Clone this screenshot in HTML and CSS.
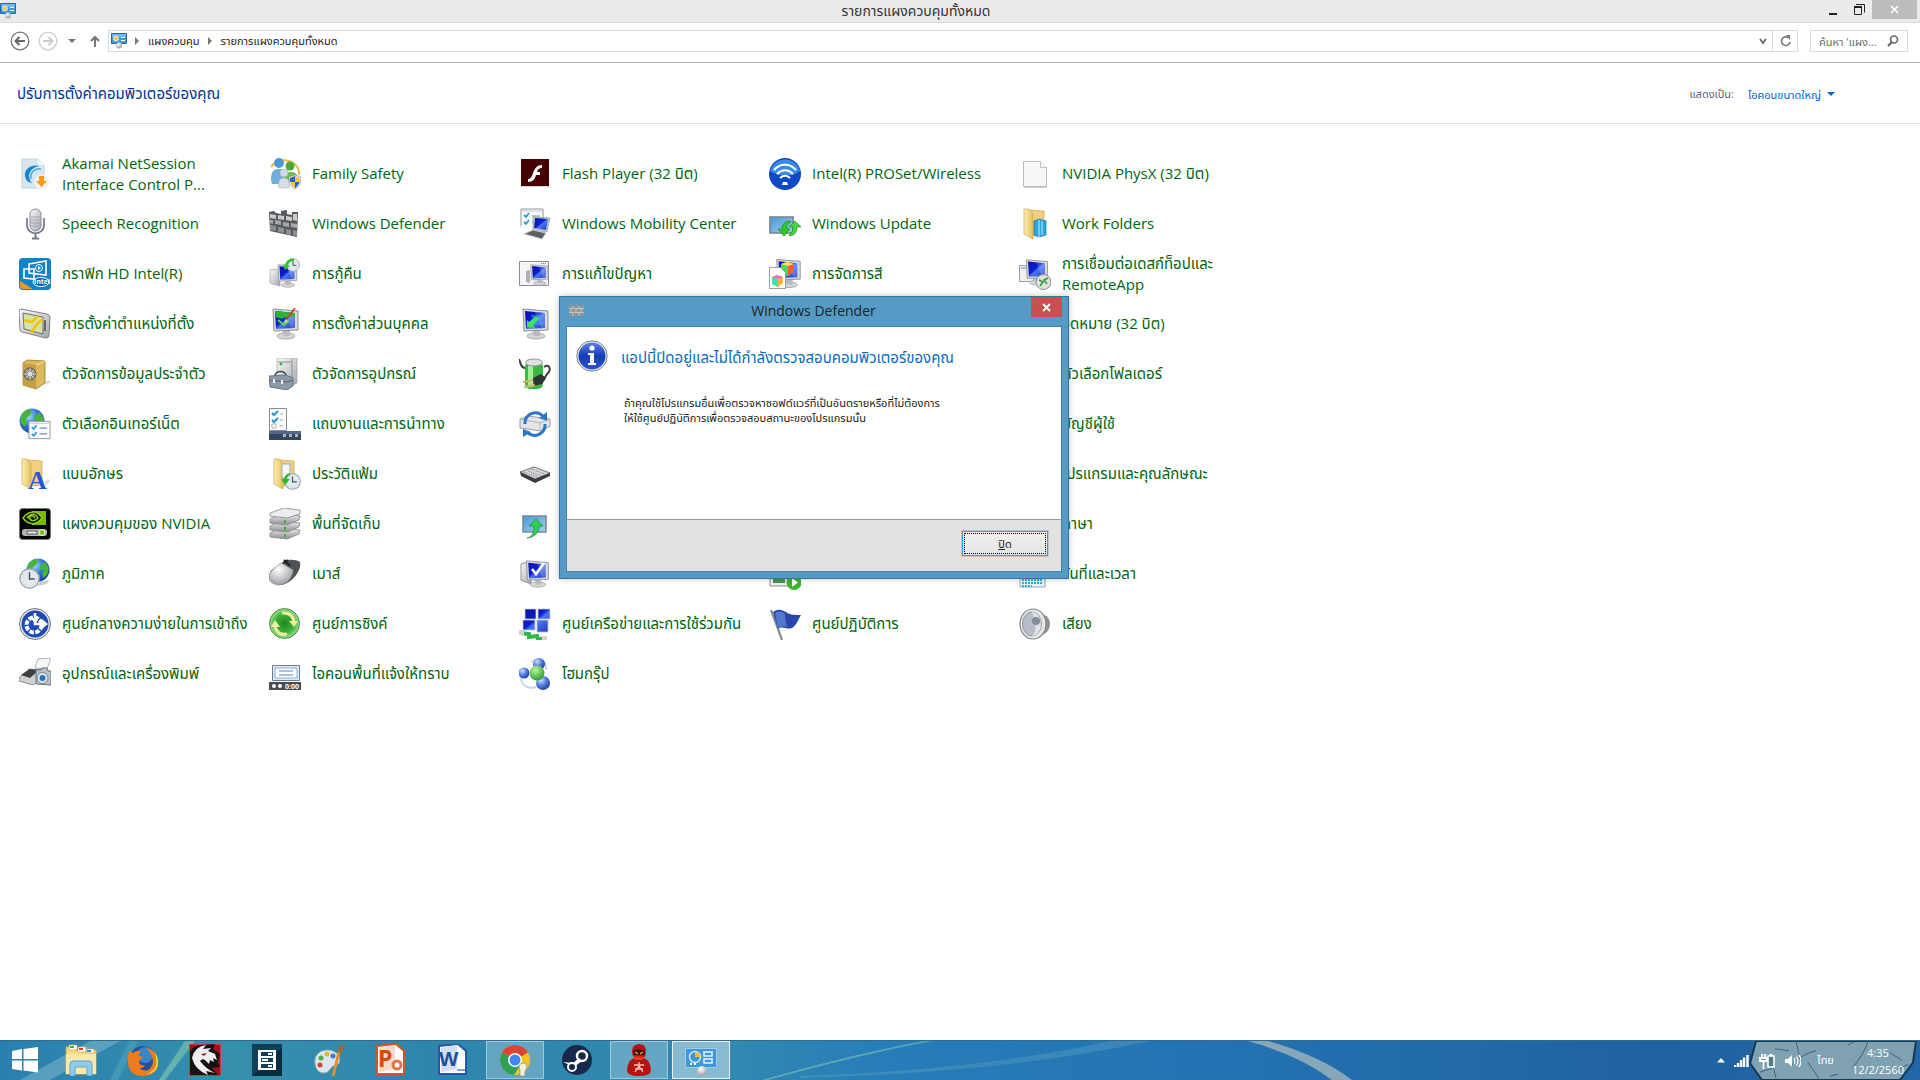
FILE: index.html
```html
<!DOCTYPE html>
<html lang="th">
<head>
  <meta charset="UTF-8" />
  <meta name="viewport" content="width=device-width, initial-scale=1.0"/>
  <title>รายการแผงควบคุมทั้งหมด</title>
  <link rel="stylesheet" href="styles.css">
</head>
<body>

<!-- icon sprite -->
<svg class="sprite" aria-hidden="true">
  <defs>
    <linearGradient id="gBlue" x1="0" y1="0" x2="1" y2="1"><stop offset="0" stop-color="#0a12a8"/><stop offset=".45" stop-color="#0b1fd0"/><stop offset=".55" stop-color="#4a78ee"/><stop offset="1" stop-color="#1a34c8"/></linearGradient>
    <linearGradient id="gSky" x1="0" y1="0" x2="1" y2="1"><stop offset="0" stop-color="#4c97d6"/><stop offset="1" stop-color="#9fd3ef"/></linearGradient>
    <linearGradient id="gGray" x1="0" y1="0" x2="1" y2="1"><stop offset="0" stop-color="#fbfbfb"/><stop offset="1" stop-color="#a4a7ab"/></linearGradient>
    <linearGradient id="gSteel" x1="0" y1="0" x2="0" y2="1"><stop offset="0" stop-color="#f2f2f2"/><stop offset="1" stop-color="#8a8c90"/></linearGradient>
    <linearGradient id="gFolder" x1="0" y1="0" x2="1" y2="0"><stop offset="0" stop-color="#fff0b4"/><stop offset="1" stop-color="#e3bf5c"/></linearGradient>
    <radialGradient id="gGlobe" cx=".35" cy=".3" r=".8"><stop offset="0" stop-color="#a6dcff"/><stop offset=".5" stop-color="#2c74cf"/><stop offset="1" stop-color="#123a96"/></radialGradient>
    <radialGradient id="gGreen" cx=".4" cy=".3" r=".8"><stop offset="0" stop-color="#b9f59a"/><stop offset="1" stop-color="#1d9421"/></radialGradient>
    <radialGradient id="gSync" cx=".5" cy=".5" r=".5"><stop offset="0" stop-color="#1f8a1c"/><stop offset=".6" stop-color="#3fae38"/><stop offset="1" stop-color="#9be08a"/></radialGradient>
    <radialGradient id="gBall" cx=".35" cy=".3" r=".8"><stop offset="0" stop-color="#cfe0ff"/><stop offset=".5" stop-color="#4f78d8"/><stop offset="1" stop-color="#173a9c"/></radialGradient>
    <radialGradient id="gSilver" cx=".4" cy=".3" r=".8"><stop offset="0" stop-color="#ffffff"/><stop offset="1" stop-color="#8d9096"/></radialGradient>
    <linearGradient id="gInfo" x1="0" y1="0" x2="0" y2="1"><stop offset="0" stop-color="#5b83e0"/><stop offset=".5" stop-color="#173bb8"/><stop offset="1" stop-color="#2a55d0"/></linearGradient>
  </defs>

  <!-- shared parts -->
  <symbol id="p-monitor" viewBox="0 0 32 32">
    <ellipse cx="17" cy="28" rx="9" ry="3" fill="#d4d6d9" stroke="#a8abb0"/>
    <path d="M13 22l8 1v5h-6z" fill="#b9bbbf"/>
    <path d="M4 1l25 2v19l-24 1z" fill="#d9dbde" stroke="#8d9095"/>
    <path d="M6 3l20 2v15l-19 1z" fill="url(#gBlue)"/>
    <path d="M16 4l10 1v15h-4z" fill="#fff" opacity=".2"/>
  </symbol>
  <symbol id="p-folder" viewBox="0 0 32 32">
    <path d="M9 2l14 1v24l-12 1z" fill="#efd080" stroke="#c9a548" stroke-width=".7"/>
    <path d="M3 1l5 0 4 5v25l-9-5z" fill="url(#gFolder)" stroke="#cda84a" stroke-width=".7"/>
  </symbol>
  <symbol id="p-clock" viewBox="0 0 20 20">
    <circle cx="10" cy="10" r="9.200" fill="#e4ebf0" stroke="#97a1aa" stroke-width="1.200"/>
    <circle cx="10" cy="10" r="7" fill="none" stroke="#b9c3cb" stroke-dasharray="1 2.600"/>
    <path d="M10 4v6.500h5" fill="none" stroke="#47535e" stroke-width="1.400"/>
  </symbol>
  <symbol id="p-globe" viewBox="0 0 24 24">
    <circle cx="12" cy="12" r="11.500" fill="url(#gGlobe)"/>
    <path d="M3 5l5-4 4 2-2 4-4 3 2 4-3 3-4-4zM14 8l5-4 4 6-2 7-4 3-1-5 2-3-4-1z" fill="#49b43a"/>
    <path d="M10 15l4 2-1 5-3-3z" fill="#7ed05a"/>
  </symbol>
  <symbol id="p-list" viewBox="0 0 24 20">
    <path d="M1 1h22v18h-22z" fill="#fbfcfe" stroke="#8f959d"/>
    <path d="M1 3h22" stroke="#c5c9cf"/>
    <path d="M4 7l2 2 3-4M4 14l2 2 3-4" fill="none" stroke="#2a9ad4" stroke-width="1.800"/>
    <path d="M12 8h8M12 14h8" stroke="#7d8aa8" stroke-width="1.200"/>
  </symbol>

  <!-- control panel items -->
  <symbol id="i-akamai" viewBox="0 0 32 32">
    <path d="M3 1h16l6 6v23H3z" fill="#d9e6f0" stroke="#c2d3e0"/><path d="M19 1v6h6z" fill="#f4f8fb"/>
    <path d="M20 8C11 6 5 12 6 18s4 6 7 7c-5-6-4-14 7-17z" fill="#1c86cc"/><path d="M22 11c-7-1-11 4-10 10" fill="none" stroke="#4bb2e6" stroke-width="1.600"/>
    <circle cx="22.500" cy="24" r="7.500" fill="#eef3f7"/><path d="M20 18h5v5h3l-5.500 6-5.500-6h3z" fill="#f79a1c"/>
  </symbol>
  <symbol id="i-family" viewBox="0 0 32 32">
    <path d="M2 9a15 13 0 0 1 28 8" fill="none" stroke="#f6b84a" stroke-width="2"/>
    <circle cx="10" cy="5" r="5" fill="#4f97cf"/><path d="M2 22c0-9 3-11 8-11s8 3 8 10l-5 5H3z" fill="#6daedb"/>
    <circle cx="21" cy="8" r="4.500" fill="#4aa83c"/><path d="M15 23c0-7 2-9 7-9s7 3 7 9z" fill="#6dbb57"/>
    <circle cx="15" cy="15" r="4" fill="#d3dae2" stroke="#a1aab4" stroke-width=".5"/><path d="M10 30c-1-8 1-10 5-10s6 3 5 10z" fill="#d6dee7" stroke="#a1aab4" stroke-width=".5"/>
    <path d="M20 19l6-2 6 2c0 7-2 10-6 12-4-2-6-5-6-12z" fill="#f3f3f3" stroke="#888" stroke-width=".6"/>
    <path d="M21 20l5-2v6h-5zM26 24h4.500c-1 3-2 4-4.500 6z" fill="#2469c7"/><path d="M26 18l5 2v4h-5zM21.500 24H26v6c-2.500-2-3.500-3-4.500-6z" fill="#f9c831"/>
  </symbol>
  <symbol id="i-flash" viewBox="0 0 32 32">
    <path d="M2 2h28v27H2z" fill="#bbb" opacity=".6"/><path d="M2 1h28v27H2z" fill="#450006"/>
    <path d="M23 7c-5 0-7 3-9 8-1 4-3 6-5 6v3c5 0 7-3 8-7h4v-3h-3c1-3 2-4 5-4z" fill="#fff"/>
  </symbol>
  <symbol id="i-wifi" viewBox="0 0 32 32">
    <circle cx="16" cy="16" r="16" fill="#0f49c8"/><path d="M1 13a15.500 15.500 0 0 1 30 0c-8 6-20 6-30 0z" fill="#3a8ae8"/>
    <path d="M5 12c6-7 16-7 22 0M8 16c5-5 11-5 16 0M11 20c3-3 7-3 10 0" fill="none" stroke="#fff" stroke-width="2.200"/>
    <path d="M13 27l1-3h4l1 3z" fill="#fff"/>
  </symbol>
  <symbol id="i-page" viewBox="0 0 32 32">
    <path d="M4.500 3.500h17l6 6v19h-23z" fill="#f8f8f8" stroke="#bdbdbd"/><path d="M21.500 3.500v6h6" fill="#fff" stroke="#bdbdbd"/><path d="M5 29.500h23" stroke="#cfcfcf"/>
  </symbol>
  <symbol id="i-mic" viewBox="0 0 32 32">
    <path d="M8 10v7c0 11 17 11 17 0v-7" fill="none" stroke="#6c6f82" stroke-width="1.600"/>
    <rect x="11" y="1" width="11" height="22" rx="5.500" fill="url(#gGray)" stroke="#83869a"/>
    <path d="M12 9h9M12 12h9M12 15h9M12 18h9" stroke="#9ea1b4"/><path d="M16.500 25v5M13 30.500h7" stroke="#74778b" stroke-width="2"/>
  </symbol>
  <symbol id="i-wall" viewBox="0 0 32 32">
    <path d="M0 4l5-1 2 2 5 1V3l6-1v4l5 1V4h6l-1 25L1 23z" fill="#565a5e"/>
    <path d="M1 6l6 1v4l-6-1zM9 7l6 1v4l-6-1zM17 8l6 1v4l-6-1zM24 6l4 0v7l-4-1z" fill="#c9cdd1"/>
    <path d="M1 12l3 0v4l-3-1zM6 12l6 1v4l-6-1zM14 14l6 1v4l-6-1zM22 15l6 1v4l-6-1z" fill="#a3a9ad"/>
    <path d="M1 17l6 1v5l-6-1zM9 19l6 1v5l-6-1zM17 21l5 1v5l-5-1zM24 22l4 1v5l-4-1z" fill="#8c9093"/>
  </symbol>
  <symbol id="i-mobility" viewBox="0 0 32 32">
    <use href="#p-list" x="1" y="0" width="24" height="20"/><path d="M2 17h16v4H2z" fill="#fbfcfe"/>
    <path d="M14 9l17 1-3 14-14-2z" fill="#c9cdd3" stroke="#7d8187" stroke-width=".6"/><path d="M16 10l13 1-2 11-12-2z" fill="url(#gBlue)"/>
    <path d="M14 22l13 3-4 6-18-5z" fill="#5c6066" stroke="#c8cace"/>
  </symbol>
  <symbol id="i-update" viewBox="0 0 32 32">
    <path d="M1 9h23v16H1z" fill="url(#gSky)" stroke="#76828d" stroke-width="1.600"/>
    <path d="M20 13c-6 1-7 5-7 8H9l6 7 6-7h-3c0-3 0-5 4-7z" fill="#2fc72b" stroke="#128017" stroke-width=".6"/>
    <path d="M21 28c5-1 7-4 7-9h4l-6-6-6 6h4c0 3-1 6-4 8z" fill="#45da3c" stroke="#128017" stroke-width=".6"/>
  </symbol>
  <symbol id="i-workfolders" viewBox="0 0 32 32">
    <use href="#p-folder" x="2" width="32" height="32"/><path d="M15 13l5-2 7 2v14l-7 2-5-2z" fill="#2ea3dc" stroke="#1676ae" stroke-width=".7"/><path d="M20 12v18M23 13v14" stroke="#a5e1fa" stroke-width="1.200"/>
  </symbol>
  <symbol id="i-recovery" viewBox="0 0 32 32">
    <path d="M1 12l6-1 4 2v15l-8-2-2-1z" fill="url(#gGray)" stroke="#96999e" stroke-width=".6"/><use href="#p-monitor" x="6" y="5" width="24" height="26"/>
    <use href="#p-clock" x="17" y="0" width="14" height="14"/><path d="M25 1c-5-1-8 2-9 6l-2-1 2 6 5-4-2-1c1-3 3-4 6-4z" fill="#37c62f"/>
  </symbol>
  <symbol id="i-trouble" viewBox="0 0 32 32">
    <path d="M.5 3.500h29v24H.500z" fill="#f4f5f7" stroke="#8a8f96"/><path d="M22 5.500h6" stroke="#7b8087" stroke-dasharray="1 1"/>
    <path d="M7 13l4-1v13l-4-1z" fill="#aeb1b5"/><use href="#p-monitor" x="9" y="6" width="22" height="22"/>
  </symbol>
  <symbol id="i-color" viewBox="0 0 32 32">
    <use href="#p-monitor" x="4" y="-1" width="30" height="33"/><path d="M12 6l6-2 7 2v8l-6 4-7-4z" fill="#ff5a3c"/><path d="M12 6l7 2v10l-7-4z" fill="#42e05a"/><path d="M12 6l6-2 7 2-6 2z" fill="#ffe94a"/>
    <path d="M.5 9.500h11l5 5v16H.500z" fill="#fff" stroke="#9a9da2"/><path d="M3 19l5-2 6 2v6l-5 4-6-3z" fill="#ffb234"/><path d="M3 19l6 2v8l-6-3z" fill="#35e8a8"/><path d="M3 19l5-2 6 2-5 2z" fill="#f56ad0"/>
  </symbol>
  <symbol id="i-remote" viewBox="0 0 32 32">
    <path d="M.5 7.500h14v16h-14z" fill="#f0f1f4" stroke="#9da1a8"/><path d="M2 10h12" stroke="#6f87b8"/><use href="#p-monitor" x="4" y="0" width="27" height="29"/>
    <circle cx="24.500" cy="24" r="7.500" fill="#dfe2e0" stroke="#8c8f8d"/><path d="M20 22l4 2-3 4M29 20l-4 2 3 4" fill="none" stroke="#2f9a35" stroke-width="1.600"/>
  </symbol>
  <symbol id="i-location" viewBox="0 0 32 32">
    <path d="M2 1l26 5q3 1 3 3l-1 18q0 3-3 3L3 24q-2 0-2-3L0 4q0-3 2-3z" fill="url(#gGray)" stroke="#7c8086"/>
    <path d="M4 5l20 4v17L5 21z" fill="#d5e3a8" stroke="#6c7075"/><path d="M5 12l8 2 6-6M12 25l6-9 6-5" fill="none" stroke="#f3c313" stroke-width="2.600"/><path d="M26 12v11" stroke="#65686c" stroke-width="2"/>
  </symbol>
  <symbol id="i-personal" viewBox="0 0 32 32">
    <use href="#p-monitor" width="32" height="32"/><path d="M6 3l20 2v4C18 7 14 13 7 9z" fill="#2cb62f"/><path d="M9 12l6 5 5-4" stroke="#5bd84a" stroke-width="2" fill="none"/><path d="M26 0L17 12" stroke="#d23a2a" stroke-width="1.600"/><path d="M17 11l-3 5 5-3z" fill="#e8d9a0"/>
  </symbol>
  <symbol id="i-arrowscreen" viewBox="0 0 32 32">
    <use href="#p-monitor" width="32" height="32"/><path d="M12 7h14v3H13zM13 14h13v3H13z" fill="#3a9bff" opacity=".6"/><path d="M17 8l-7 6-2-2v7l8 1-2-3 6-6z" fill="#46e060"/>
  </symbol>
  <symbol id="i-safe" viewBox="0 0 32 32">
    <path d="M27 27l5-3-2-2-4 2z" fill="#ddd"/><path d="M4 5l4-3 18 1v22l-9 6-13-4z" fill="#dcb95c" stroke="#96762a" stroke-width=".8"/><path d="M4 5l13 2v24L4 27z" fill="#c69f45"/><path d="M17 7l9-4" stroke="#f5e3a2"/>
    <circle cx="11" cy="16" r="6" fill="#8d8a80" stroke="#54524c"/><circle cx="11" cy="16" r="2" fill="#e8e8e8"/><path d="M11 10v12M5 16h12M7 12l8 8M15 12l-8 8" stroke="#dcdcdc"/>
  </symbol>
  <symbol id="i-device" viewBox="0 0 32 32">
    <path d="M8 1l4-1h16v25l-4 2-16-2z" fill="url(#gGray)" stroke="#97999d" stroke-width=".6"/><path d="M23 1v25M9 4h13" stroke="#8a8d91"/><circle cx="12" cy="6" r="1.500" fill="#38b838"/>
    <path d="M6 18c0-6 11-6 11 0" fill="none" stroke="#43474c" stroke-width="1.600"/><path d="M0 18l17-1 7 3v8l-6 4-17-3z" fill="#8b9aa8" stroke="#5b6771" stroke-width=".8"/><path d="M0 22l18 2 6-2" fill="none" stroke="#56616b"/><path d="M5 21v4M13 22v4" stroke="#eee" stroke-width="2"/>
  </symbol>
  <symbol id="i-power" viewBox="0 0 32 32">
    <path d="M0 1c2 5 2 9 6 9M25 9c6-4 7 3 4 6s-4 7-5 8" fill="none" stroke="#3c3e42" stroke-width="2"/>
    <rect x="6" y="4" width="18" height="27" rx="5" fill="#39b942"/><rect x="9" y="7" width="5" height="22" fill="#a4ee9a"/><ellipse cx="15" cy="4.500" rx="8.500" ry="3.500" fill="#dfe1e3" stroke="#909498"/>
    <path d="M14 20l8-4 5 4-4 6-8 2z" fill="#303236"/><path d="M4 24l10-2M5 29l11-2" stroke="#d8b364" stroke-width="2"/>
  </symbol>
  <symbol id="i-internet" viewBox="0 0 32 32"><use href="#p-globe" width="26" height="26"/><use href="#p-list" x="9" y="12" width="23" height="20"/></symbol>
  <symbol id="i-taskbar" viewBox="0 0 32 32">
    <path d="M.5.500h17v22H.500z" fill="#fcfcfd" stroke="#888c93"/><path d="M3 5l2 2 4-4M3 12l2 2 4-4" fill="none" stroke="#2a94cf" stroke-width="2"/><path d="M3 16h4v4H3z" fill="none" stroke="#b0b3b8"/><path d="M11 6h3M11 12h3M11 18h3" stroke="#a5a8ad"/>
    <path d="M0 23h32v9H0z" fill="#33455f"/><path d="M0 23h32v3H0z" fill="#56688a"/><path d="M14 26h3v3h-3zM20 26h3v3h-3zM26 26h3v3h-3z" fill="#aab4c4"/>
  </symbol>
  <symbol id="i-syncdrive" viewBox="0 0 32 32">
    <path d="M1 11l8-3 22 3v7l-9 5L1 20z" fill="#e3e5e8" stroke="#9a9da1"/><path d="M1 11l20 4v8M21 15l10-4" fill="none" stroke="#b4b7bb"/>
    <path d="M6 16A10.500 10.500 0 0 1 24 8M26 16A10.500 10.500 0 0 1 9 25" fill="none" stroke="#2d76c6" stroke-width="3"/><path d="M28 4v9l-8-3zM4 29v-8l8 3z" fill="#2d76c6"/>
  </symbol>
  <symbol id="i-history" viewBox="0 0 32 32"><use href="#p-folder" x="2" width="32" height="32"/><path d="M13 6h8v14h-8z" fill="#f3f6fa" stroke="#a8adb4"/><use href="#p-clock" x="15" y="15" width="17" height="17"/><path d="M21 15c-4 1-6 4-6 6h-3l4 6 5-6h-3c0-2 1-3 3-4z" fill="#2fb82b"/></symbol>
  <symbol id="i-keyboard" viewBox="0 0 32 32"><path d="M1 14l14-5 16 6-15 6z" fill="#d6d7da" stroke="#777"/><path d="M1 14l15 7v4L2 18zM16 21l15-6v3l-15 7z" fill="#3a3c40"/><path d="M5 14l13 5M9 13l13 5M12 11l14 5" stroke="#85888c" stroke-dasharray="1.500 1"/></symbol>
  <symbol id="i-nvidia" viewBox="0 0 32 32">
    <rect x=".5" y=".5" width="31" height="31" rx="3" fill="#050505" stroke="#777"/><path d="M13 3h14v14H13z" fill="#76b900"/>
    <path d="M4 10c6-8 15-8 19 0-5 7-13 8-19 0z" fill="#111" stroke="#8fce1c" stroke-width="1.400"/><path d="M8 10c4-5 8-5 11 0-4 4-7 3-9 0 2-3 4-3 6 0" fill="none" stroke="#8fce1c" stroke-width="1.400"/>
    <rect x="3" y="21" width="25" height="7" rx="3" fill="#b4b4b4"/><path d="M8 23h10v3H8z" fill="#eee" stroke="#555"/><circle cx="23" cy="24.500" r="3" fill="#7cc21a" stroke="#eee"/>
  </symbol>
  <symbol id="i-storage" viewBox="0 0 32 32">
    <g stroke="#85888d" stroke-width=".8"><path d="M1 25l11-5 19 2-1 4-12 5-17-2z" fill="url(#gSteel)"/><path d="M1 18l11-5 19 2-1 4-12 5-17-2z" fill="url(#gSteel)"/><path d="M1 11l11-5 19 2-1 4-12 5-17-2z" fill="url(#gSteel)"/><path d="M1 5l14-5 16 2v4L18 10 1 8z" fill="#ececee"/></g>
    <path d="M16 12v3M16 19v3M16 26v3" stroke="#36b52c" stroke-width="2"/>
  </symbol>
  <symbol id="i-upscreen" viewBox="0 0 32 32"><path d="M4 8h23v16H4z" fill="url(#gSky)" stroke="#7d8a97" stroke-width="1.600"/><path d="M8 30c5-1 7-5 7-12h-5l7-7 7 7h-4c0 7-4 11-12 12z" fill="#30cf58" stroke="#188c39" stroke-width=".7"/></symbol>
  <symbol id="i-region" viewBox="0 0 32 32"><path d="M18 28q12-1 12-6l-9 2z" fill="#ccc"/><use href="#p-globe" x="7" width="24" height="24"/><use href="#p-clock" x="0" y="10" width="21" height="21"/></symbol>
  <symbol id="i-mouse" viewBox="0 0 32 32"><path d="M11 8C15 0 26 1 31 4c2 9-9 22-19 23-6 0-13-3-12-9S5 9 11 8z" fill="#4e5156"/><path d="M12 5c5 2 8 5 12 7 0 7-6 14-13 15C5 27 0 24 0 19S6 9 12 5z" fill="url(#gSilver)" stroke="#909398" stroke-width=".6"/><path d="M15 2l6 6M14 5l5-3" stroke="#222" stroke-width="2"/></symbol>
  <symbol id="i-defaults" viewBox="0 0 32 32"><path d="M2 6l7-2 3 3v19L2 22z" fill="url(#gGray)" stroke="#8e9196"/><use href="#p-monitor" x="4" y="1" width="28" height="30"/><path d="M13 11l4 5 8-11" stroke="#fff" stroke-width="2.600" fill="none"/></symbol>
  <symbol id="i-autoplay" viewBox="0 0 32 32"><path d="M1 10h23v18H1z" fill="#eef0ee" stroke="#888"/><path d="M4 20h12v5H4z" fill="#3f9b4a"/><circle cx="25" cy="24.500" r="7.500" fill="#3fb52f"/><path d="M23 20l6 4.500-6 4.500z" fill="#fff"/></symbol>
  <symbol id="i-calendar" viewBox="0 0 32 32"><path d="M1 8h25v21H1z" fill="#e9f4f9" stroke="#9ba5ab"/><path d="M3 22h20M3 25h20M3 28h10" stroke="#35b0d2" stroke-width="2" stroke-dasharray="2 1"/></symbol>
  <symbol id="i-ease" viewBox="0 0 32 32">
    <circle cx="16" cy="16" r="15.500" fill="#e4e8ef" stroke="#70757d"/><circle cx="16" cy="16" r="13.500" fill="#1e49b6"/><circle cx="15" cy="17" r="7.500" fill="none" stroke="#fff" stroke-width="4" stroke-dasharray="4.500 1.400"/>
    <path d="M16 5v11h9" fill="none" stroke="#fff" stroke-width="2.600"/><path d="M12 10h8l-4 6zM23 11v10l6-5z" fill="#fff"/>
  </symbol>
  <symbol id="i-sync" viewBox="0 0 32 32">
    <circle cx="15.500" cy="15.500" r="15" fill="url(#gSync)" stroke="#4e8a4a"/>
    <path d="M13 5q10-1 12 8M18 26q-9 2-12-7" fill="none" stroke="#f1eea0" stroke-width="3"/><path d="M20 13h9l-4 6zM2 19h9l-5-7z" fill="#f1eea0"/>
  </symbol>
  <symbol id="i-network" viewBox="0 0 32 32">
    <g fill="url(#gBlue)" stroke="#c3c6ce" stroke-width=".8"><path d="M6 1h11v10H6zM19 1h12v10H19zM4 12h12v10H4zM18 12h11v12H18z"/></g>
    <path d="M1 25l9 1v3l8-1 1 3h6" fill="none" stroke="#2fb648" stroke-width="4"/><path d="M0 22h5v5H0zM23 28h5v4h-5z" fill="#d0d2d4"/>
  </symbol>
  <symbol id="i-flag" viewBox="0 0 32 32"><path d="M2 2l11 30" stroke="#8a8d92" stroke-width="2.200"/><path d="M4 4c6-4 9-2 13 0 4 3 8 3 15 3-3 5-5 11-9 13-5 2-10-3-14 1z" fill="#2847a8"/><path d="M6 5c5-3 8-1 10 1 0 5 1 8 2 13-4-2-6 0-9 1z" fill="#6a8be0" opacity=".7"/></symbol>
  <symbol id="i-sound" viewBox="0 0 32 32"><path d="M13 3l12 4q6 2 6 9t-6 10l-12 5z" fill="#8f9296"/><ellipse cx="14" cy="16" rx="13" ry="15" fill="#e6e8ea" stroke="#828589" stroke-width="1.200"/><ellipse cx="13" cy="16" rx="9.500" ry="12" fill="#b8bec7" stroke="#93989e"/><path d="M13 4a9 12 0 0 1 0 24q7-6 0-24z" fill="#dfe3e8"/><circle cx="17" cy="13" r="4" fill="#868c95"/></symbol>
  <symbol id="i-printer" viewBox="0 0 32 32">
    <path d="M19 1l13-1-4 11-12-1z" fill="#f7f8fa" stroke="#b0b3b8"/><path d="M0 20l10-9 14 1 2 6-12 9-14-4z" fill="#cfd1d4" stroke="#898c90"/><path d="M2 17l9-6 9 1-9 8z" fill="#3e4248"/>
    <path d="M17 12h5l1-2h5l1 3h3v14l-15-1z" fill="#b9c0c8" stroke="#6c737b"/><circle cx="23.500" cy="20" r="5.500" fill="#e4e8ec" stroke="#7a828b"/><circle cx="23.500" cy="20" r="3" fill="#2673b5"/>
  </symbol>
  <symbol id="i-homegroup" viewBox="0 0 32 32"><path d="M12 4c8-6 16-1 15 8M2 20c1 9 8 11 15 9" fill="none" stroke="#c3d6f2" stroke-width="2"/><circle cx="20" cy="6" r="6" fill="url(#gBall)"/><circle cx="5" cy="15" r="5.500" fill="url(#gBall)"/><circle cx="24" cy="25" r="7" fill="url(#gBall)"/><circle cx="18" cy="15" r="7.500" fill="url(#gGreen)"/></symbol>

  <symbol id="i-info" viewBox="0 0 32 32">
    <circle cx="16" cy="16" r="15.200" fill="#e9ecf2" stroke="#7b7f87"/><circle cx="16" cy="16" r="13.500" fill="url(#gInfo)"/>
    <circle cx="16" cy="8" r="2.600" fill="#fff"/><path d="M12 13h6v10h2v2h-8v-2h2v-8h-2z" fill="#fff"/>
  </symbol>
  <symbol id="i-panel" viewBox="0 0 16 16">
    <path d="M.5.500h15v10h-15z" fill="#3f9ae0" stroke="#2469a6"/><path d="M1 1h14v3H1z" fill="#6fbaf0"/><circle cx="5" cy="5.500" r="2.500" fill="#f9c14b" stroke="#fff" stroke-width=".7"/><path d="M10 4.500h4M10 7.500h4" stroke="#fff"/><circle cx="8" cy="12.500" r="3" fill="url(#gSilver)"/>
  </symbol>
</svg>

<div class="desktop">
  <main class="window">
    <header class="titlebar">
      <svg class="icon16"><use href="#i-panel"/></svg>
      <h1>รายการแผงควบคุมทั้งหมด</h1>
      <div class="win-buttons">
        <button class="win-btn" aria-label="ย่อ"><svg width="12" height="12"><path d="M2 9h8v2H2z" fill="#222"/></svg></button>
        <button class="win-btn" aria-label="คืนค่า"><svg width="12" height="12"><path d="M1.500 3.500h7v7h-7z" fill="none" stroke="#222"/><path d="M1 3h8" stroke="#222" stroke-width="2"/><path d="M3 .5h8.500v8" fill="none" stroke="#222"/></svg></button>
        <button class="win-btn close" aria-label="ปิด"><svg width="9" height="9"><path d="M1 1l7 7M8 1l-7 7" stroke="#fff" stroke-width="1.600"/></svg></button>
      </div>
    </header>

    <nav class="toolbar">
      <button class="nav-btn" aria-label="ย้อนกลับ"><svg width="20" height="20" viewBox="0 0 20 20"><circle cx="10" cy="10" r="8.800" fill="none" stroke="#777" stroke-width="1.300"/><path d="M15 10H6M9.500 6L5.500 10l4 4" fill="none" stroke="#666" stroke-width="2"/></svg></button>
      <button class="nav-btn" aria-label="ไปข้างหน้า"><svg width="20" height="20" viewBox="0 0 20 20"><circle cx="10" cy="10" r="8.800" fill="none" stroke="#ccc" stroke-width="1.300"/><path d="M5 10h9M10.500 6l4 4-4 4" fill="none" stroke="#ccc" stroke-width="2"/></svg></button>
      <button class="nav-btn recent" aria-label="ล่าสุด"><svg width="8" height="5"><path d="M0 0h8l-4 4z" fill="#777"/></svg></button>
      <button class="nav-btn" aria-label="ขึ้น"><svg width="10" height="12"><path d="M5 12V2M1 6l4-4 4 4" fill="none" stroke="#777" stroke-width="2"/></svg></button>
      <div class="address">
        <svg class="icon16"><use href="#i-panel"/></svg>
        <svg class="sep" width="5" height="8"><path d="M0 0l4 4-4 4z" fill="#777"/></svg>
        <a href="#">แผงควบคุม</a>
        <svg class="sep" width="5" height="8"><path d="M0 0l4 4-4 4z" fill="#777"/></svg>
        <a href="#">รายการแผงควบคุมทั้งหมด</a>
        <button class="addr-btn drop" aria-label="ประวัติ"><svg width="8" height="7"><path d="M1 1l3 4 3-4" fill="none" stroke="#666" stroke-width="1.800"/></svg></button>
        <button class="addr-btn refresh" aria-label="รีเฟรช"><svg width="11" height="12"><path d="M8 2.500A4.300 4.300 0 1 0 10 7" fill="none" stroke="#777" stroke-width="1.600"/><path d="M6 0h4v5z" fill="#777"/></svg></button>
      </div>
      <div class="search">
        <input type="text" placeholder="ค้นหา 'แผง..." aria-label="ค้นหา">
        <svg width="12" height="12"><circle cx="7" cy="4.500" r="3.500" fill="none" stroke="#666" stroke-width="1.600"/><path d="M5 7l-4 4" stroke="#666" stroke-width="2.200"/></svg>
      </div>
    </nav>

    <section class="heading">
      <h2>ปรับการตั้งค่าคอมพิวเตอร์ของคุณ</h2>
      <div class="view">
        <label for="viewBy">แสดงเป็น:</label>
        <select id="viewBy"><option>ไอคอนขนาดใหญ่</option></select>
        <svg width="8" height="5"><path d="M0 0h8l-4 4z" fill="#0066cc"/></svg>
      </div>
    </section>

    <div class="items">
      <a class="item" href="#"><svg><use href="#i-akamai"/></svg><span>Akamai NetSession<br>Interface Control P...</span></a>
      <a class="item" href="#"><svg><use href="#i-family"/></svg><span>Family Safety</span></a>
      <a class="item" href="#"><svg><use href="#i-flash"/></svg><span>Flash Player (32 บิต)</span></a>
      <a class="item" href="#"><svg><use href="#i-wifi"/></svg><span>Intel(R) PROSet/Wireless</span></a>
      <a class="item" href="#"><svg><use href="#i-page"/></svg><span>NVIDIA PhysX (32 บิต)</span></a>

      <a class="item" href="#"><svg><use href="#i-mic"/></svg><span>Speech Recognition</span></a>
      <a class="item" href="#"><svg><use href="#i-wall"/></svg><span>Windows Defender</span></a>
      <a class="item" href="#"><svg><use href="#i-mobility"/></svg><span>Windows Mobility Center</span></a>
      <a class="item" href="#"><svg><use href="#i-update"/></svg><span>Windows Update</span></a>
      <a class="item" href="#"><svg><use href="#i-workfolders"/></svg><span>Work Folders</span></a>

      <a class="item" href="#">
        <svg viewBox="0 0 32 32">
          <rect width="32" height="32" rx="4" fill="#1381c8"/><path d="M1 23l13 8H4q-3 0-3-3z" fill="#e49a2c"/>
          <path d="M10 6l17-3v14l-17-2zM5 11h10v10l-10-1z" fill="none" stroke="#fff" stroke-width="1.600"/><circle cx="20" cy="10" r="3.500" fill="none" stroke="#fff"/><path d="M19 8l3 2-3 2z" fill="#fff"/>
          <ellipse cx="22" cy="24" rx="8" ry="4.500" fill="#0b5fa8" stroke="#fff"/><text class="svg-text" x="15" y="26" font-size="7">intel</text>
        </svg>
        <span>กราฟิก HD Intel(R)</span>
      </a>
      <a class="item" href="#"><svg><use href="#i-recovery"/></svg><span>การกู้คืน</span></a>
      <a class="item" href="#"><svg><use href="#i-trouble"/></svg><span>การแก้ไขปัญหา</span></a>
      <a class="item" href="#"><svg><use href="#i-color"/></svg><span>การจัดการสี</span></a>
      <a class="item" href="#"><svg><use href="#i-remote"/></svg><span>การเชื่อมต่อเดสก์ท็อปและ<br>RemoteApp</span></a>

      <a class="item" href="#"><svg><use href="#i-location"/></svg><span>การตั้งค่าตำแหน่งที่ตั้ง</span></a>
      <a class="item" href="#"><svg><use href="#i-personal"/></svg><span>การตั้งค่าส่วนบุคคล</span></a>
      <a class="item" href="#"><svg><use href="#i-arrowscreen"/></svg></a>
      <a class="item" href="#"></a>
      <a class="item" href="#"><svg></svg><span>จดหมาย (32 บิต)</span></a>

      <a class="item" href="#"><svg><use href="#i-safe"/></svg><span>ตัวจัดการข้อมูลประจำตัว</span></a>
      <a class="item" href="#"><svg><use href="#i-device"/></svg><span>ตัวจัดการอุปกรณ์</span></a>
      <a class="item" href="#"><svg><use href="#i-power"/></svg></a>
      <a class="item" href="#"></a>
      <a class="item" href="#"><svg></svg><span>ตัวเลือกโฟลเดอร์</span></a>

      <a class="item" href="#"><svg><use href="#i-internet"/></svg><span>ตัวเลือกอินเทอร์เน็ต</span></a>
      <a class="item" href="#"><svg><use href="#i-taskbar"/></svg><span>แถบงานและการนำทาง</span></a>
      <a class="item" href="#"><svg><use href="#i-syncdrive"/></svg></a>
      <a class="item" href="#"></a>
      <a class="item" href="#"><svg></svg><span>บัญชีผู้ใช้</span></a>

      <a class="item" href="#">
        <svg viewBox="0 0 32 32"><use href="#p-folder" width="32" height="32"/><path d="M27 28l5-7-6 2z" fill="#ddd"/><text x="9" y="31" font-size="26" font-family="Liberation Serif" font-weight="bold" fill="#2558cf">A</text></svg>
        <span>แบบอักษร</span>
      </a>
      <a class="item" href="#"><svg><use href="#i-history"/></svg><span>ประวัติแฟ้ม</span></a>
      <a class="item" href="#"><svg><use href="#i-keyboard"/></svg></a>
      <a class="item" href="#"></a>
      <a class="item" href="#"><svg></svg><span>โปรแกรมและคุณลักษณะ</span></a>

      <a class="item" href="#"><svg><use href="#i-nvidia"/></svg><span>แผงควบคุมของ NVIDIA</span></a>
      <a class="item" href="#"><svg><use href="#i-storage"/></svg><span>พื้นที่จัดเก็บ</span></a>
      <a class="item" href="#"><svg><use href="#i-upscreen"/></svg></a>
      <a class="item" href="#"></a>
      <a class="item" href="#"><svg></svg><span>ภาษา</span></a>

      <a class="item" href="#"><svg><use href="#i-region"/></svg><span>ภูมิภาค</span></a>
      <a class="item" href="#"><svg><use href="#i-mouse"/></svg><span>เมาส์</span></a>
      <a class="item" href="#"><svg><use href="#i-defaults"/></svg></a>
      <a class="item" href="#"><svg><use href="#i-autoplay"/></svg></a>
      <a class="item" href="#"><svg><use href="#i-calendar"/></svg><span>วันที่และเวลา</span></a>

      <a class="item" href="#"><svg><use href="#i-ease"/></svg><span>ศูนย์กลางความง่ายในการเข้าถึง</span></a>
      <a class="item" href="#"><svg><use href="#i-sync"/></svg><span>ศูนย์การซิงค์</span></a>
      <a class="item" href="#"><svg><use href="#i-network"/></svg><span>ศูนย์เครือข่ายและการใช้ร่วมกัน</span></a>
      <a class="item" href="#"><svg><use href="#i-flag"/></svg><span>ศูนย์ปฏิบัติการ</span></a>
      <a class="item" href="#"><svg><use href="#i-sound"/></svg><span>เสียง</span></a>

      <a class="item" href="#"><svg><use href="#i-printer"/></svg><span>อุปกรณ์และเครื่องพิมพ์</span></a>
      <a class="item" href="#">
        <svg viewBox="0 0 32 32">
          <path d="M3.500 7.500h27v15h-27z" fill="#dceafa" stroke="#6c7a92"/><path d="M6 10h22v10H6z" fill="#fff" stroke="#88acd8"/><path d="M10 13h14M10 17h14" stroke="#4b84c8"/>
          <path d="M0 24h32v8H0z" fill="#4a4b4f"/><circle cx="5" cy="28" r="2" fill="#fff"/><circle cx="11" cy="28" r="2" fill="#fff"/><text class="svg-text" x="16" y="31" font-size="7">0:00</text>
        </svg>
        <span>ไอคอนพื้นที่แจ้งให้ทราบ</span>
      </a>
      <a class="item" href="#"><svg><use href="#i-homegroup"/></svg><span>โฮมกรุ๊ป</span></a>
    </div>
  </main>

  <div class="dialog" role="dialog" aria-labelledby="dlgTitle">
    <div class="dlg-bar">
      <svg width="15" height="14" viewBox="0 0 15 14"><path d="M0 1h3v2h3V1h3v2h3V1h3v12H0z" fill="#8f9496"/><path d="M0 5.500h15M0 9.500h15M4 3v3M10 3v3M2 6v3M7 6v3M12 6v3M4 10v3M10 10v3" stroke="#c2c4c2"/></svg>
      <h3 id="dlgTitle">Windows Defender</h3>
      <button class="dlg-close" aria-label="ปิด"><svg width="9" height="9"><path d="M1 1l7 7M8 1l-7 7" stroke="#fff" stroke-width="1.800"/></svg></button>
    </div>
    <div class="dlg-body">
      <svg class="dlg-icon"><use href="#i-info"/></svg>
      <div class="dlg-text">
        <h4>แอปนี้ปิดอยู่และไม่ได้กำลังตรวจสอบคอมพิวเตอร์ของคุณ</h4>
        <p>ถ้าคุณใช้โปรแกรมอื่นเพื่อตรวจหาซอฟต์แวร์ที่เป็นอันตรายหรือที่ไม่ต้องการ<br>ให้ใช้ศูนย์ปฏิบัติการเพื่อตรวจสอบสถานะของโปรแกรมนั้น</p>
      </div>
    </div>
    <div class="dlg-footer"><button class="ok"><span><u>ปิ</u>ด</span></button></div>
  </div>

  <footer class="taskbar">
    <svg class="wallpaper" viewBox="0 0 1920 40" preserveAspectRatio="none" aria-hidden="true">
      <path d="M90 0h30L50 40H20z" fill="#9cc8d6" opacity=".4"/><path d="M185 0h10l-30 40h-6z" fill="#8fd0b4" opacity=".55"/><path d="M130 0h8l-20 40h-8z" fill="#7cc3d2" opacity=".25"/>
      <path d="M768 40Q860 14 932 0h-8Q850 14 762 40z" fill="#7cc3b8" opacity=".6"/>
      <path d="M800 38Q1010 32 1150 0h-40Q980 30 800 36z" fill="#7cb8c8" opacity=".25"/>
      <path d="M1248 0h20Q1320 15 1352 40h-20Q1300 15 1248 0z" fill="#9fb4bc" opacity=".8"/>
      <path d="M1756 0h160l-3 22-13 18H1762l-12-17z" fill="#7fa2b3" stroke="#18384f" stroke-width="2"/>
      <path d="M1796 0l3 14M1775 8l14 2M1765 22l8-8M1760 32l12-4M1790 26q14-14 26-16M1808 22l12 18M1868 0q-4 14-16 28M1848 4l6-3M1890 12l12 8M1776 38l-4-16M1830 36l8-2M1896 30l12-6" fill="none" stroke="#3c5f74"/>
    </svg>
    <button class="task start" aria-label="เริ่ม"><svg width="28" height="28" viewBox="0 0 28 28"><path d="M1 5l10-2v10H1zM12.500 3L27 1v12H12.500zM1 14.500h10v10L1 23zM12.500 14.500H27v12l-14.500-2z" fill="#fff"/></svg></button>
    <button class="task" aria-label="Explorer"><svg><path d="M1 3h7l2 3h21v24H1z" fill="#f3dc85" stroke="#c9a94f"/><path d="M4 1h8v5H4zM13 3h8v5h-8zM21 5h8v4h-8z" fill="#fff" stroke="#c9a94f" stroke-width=".7"/><path d="M5 2h4v2H5z" fill="#2eb84a"/><path d="M14 4h4v2h-4z" fill="#d9432f"/><path d="M22 6h4v2h-4z" fill="#2c8ad6"/><path d="M1 10h30v20H1z" fill="#f8e9ab"/><path d="M5 32V20q0-3 3-3h16q3 0 3 3v12h-5v-9H10v9z" fill="#8ecdf0" stroke="#58a3cf"/></svg></button>
    <button class="task" aria-label="Firefox"><svg><circle cx="16" cy="15" r="13" fill="#234f9c"/><circle cx="18" cy="11" r="8" fill="#3a85c8"/><path d="M2 7l4 2q3-3 8-2-3 3-2 5l4 1-4 4q0 5 6 4-2 4-6 3 10 7 14-5 0-9-7-15 12 2 12 14 0 13-15 14Q1 32 1 17q0-6 1-10z" fill="#ee7b1c"/><path d="M28 9q5 16-8 21 12-1 11-14 0-4-3-7z" fill="#fccb3a"/></svg></button>
    <button class="task" aria-label="Dragon"><svg><path d="M0 0h32v32H0z" fill="#a3121b"/><path d="M0 0h32v32H0z" fill="none" stroke="#d66"/><path d="M1 31V8Q4 1 14 1l12-1-2 5 7 5-2 8 2 5-8 1 6 7z" fill="#161214"/><path d="M3 14Q5 3 17 1l-3 4 8-1-3 3 7 3 2 6-4-2 1 4-4-2-1 4-4-4q-3-2-5 1 6 8 15 12l-9-2 2 4Q6 26 3 14z" fill="#eee"/><path d="M12 10l6-1-3 3z" fill="#a3121b"/></svg></button>
    <button class="task" aria-label="Manager"><svg><path d="M1 0h30v32H1z" fill="#123f58"/><path d="M1 32L31 4v28z" fill="#0a2c40"/><path d="M7 6h18v20H7z" fill="#fff"/><path d="M10 10h12M10 16h12M10 22h12" stroke="#123f58" stroke-width="4"/><path d="M17 10h4M11 16h6M17 22h4" stroke="#fff" stroke-width="2"/></svg></button>
    <button class="task" aria-label="Paint"><svg><path d="M2 20C0 8 12 4 20 7s9 13 3 14-6 8-12 8S3 25 2 20z" fill="#dbe6ee" stroke="#8fa3b2"/><circle cx="8" cy="14" r="2.500" fill="#4cb04a"/><circle cx="14" cy="10" r="2.500" fill="#f0b429"/><circle cx="20" cy="12" r="2.500" fill="#3a7ad0"/><circle cx="7" cy="21" r="2.500" fill="#d6452e"/><path d="M20 32l6-24" stroke="#e58c2c" stroke-width="3"/><path d="M25 8l1-7 6 1-3 7z" fill="#9a6a3a"/></svg></button>
    <button class="task" aria-label="PowerPoint"><svg><path d="M2 2l19-2 8 7v23H2z" fill="#fff" stroke="#d9541e" stroke-width="2"/><path d="M4 4l16-3v24L4 28z" fill="#f7d9c8"/><text x="3" y="23" font-size="23" font-family="Open Sans" font-weight="bold" fill="#d24a1b">P</text><circle cx="22" cy="21" r="4" fill="none" stroke="#e2743f" stroke-width="3"/></svg></button>
    <button class="task" aria-label="Word"><svg><path d="M2 2l19-2 8 7v23H2z" fill="#fff" stroke="#2458a8" stroke-width="2"/><path d="M4 4l16-3v24L4 28z" fill="#d2e0f5"/><text x="2" y="22" font-size="20" font-family="Open Sans" font-weight="bold" fill="#1d4f9f">W</text><path d="M20 26h8" stroke="#7fa0d0" stroke-width="2"/></svg></button>
    <button class="task open" aria-label="Chrome"><svg><circle cx="16" cy="16" r="15" fill="#f2c41c"/><path d="M16 16L3 8.500A15 15 0 0 1 29 8.500z" fill="#dc4437"/><path d="M16 16L3 8.500A15 15 0 0 0 15 31l7-11z" fill="#2f9f57"/><circle cx="16" cy="16" r="7" fill="#fff"/><circle cx="16" cy="16" r="5.500" fill="#4285f4"/><path d="M20 23q0-4 4-4t4 4l-2 5v4h-5v-5z" fill="#f4f0dc" stroke="#888" stroke-width=".7"/></svg></button>
    <button class="task" aria-label="Steam"><svg><circle cx="16" cy="16" r="15" fill="#16294b"/><circle cx="21" cy="12" r="5" fill="none" stroke="#fff" stroke-width="2.400"/><path d="M2 18l11 5 8-6-3-3-6 5z" fill="#fff"/><circle cx="11" cy="23" r="4" fill="#16294b" stroke="#fff" stroke-width="2"/></svg></button>
    <button class="task open" aria-label="Garena"><svg><path d="M16 0q7 0 7 7t-4 7q8 0 9 12 0 6-12 6T4 26q1-12 9-12-4-1-4-7t7-7z" fill="#b51410"/><path d="M10 7q6-3 12 0l-1 4H11z" fill="#2b0705"/><path d="M12 8l3 2M20 8l-3 2" stroke="#ffb52e" stroke-width="1.500"/><path d="M10 12l12 1-3 3h-7z" fill="#e8382c"/><path d="M11 21h10M16 18v4l-4 6M16 22l4 6M12 25h8" stroke="#f7c0b8" stroke-width="1.300" fill="none"/></svg></button>
    <button class="task open current" aria-label="แผงควบคุม"><svg><path d="M.5 4.500h31v19H.500z" fill="#3f97d8" stroke="#9ad2f5"/><circle cx="10" cy="13" r="5.500" fill="#3f97d8" stroke="#d8edfb" stroke-width="1.400"/><path d="M10 13V7.500a5.500 5.500 0 0 1 5.500 5.500z" fill="#f6b73e"/><path d="M5 20h2M9 20h2" stroke="#fff" stroke-width="2"/><path d="M19 8h8v4h-8zM19 15h8v4h-8z" fill="none" stroke="#eaf6ff" stroke-width="1.500"/><circle cx="17" cy="27" r="5" fill="url(#gSilver)"/></svg></button>

    <div class="tray">
      <svg width="8" height="5"><path d="M0 4.500h8L4 0z" fill="#fff"/></svg>
      <svg width="16" height="14"><path d="M1 11v2M4 9v4M7 6v7M10 3.500v9.500M13.500 1v12" stroke="#fff" stroke-width="2.400"/></svg>
      <svg width="16" height="16"><path d="M3 1v4M6 1v4M1 5h7v3H1zM4.500 8v8" stroke="#fff" stroke-width="1.800" fill="none"/><path d="M9 3h6v11H9z" fill="#54788c" stroke="#fff" stroke-width="1.600"/><path d="M10.500 1h3v2h-3z" fill="#fff"/></svg>
      <svg width="17" height="14"><path d="M1 5h3l4-4v12L4 9H1z" fill="#fff"/><path d="M10 4q2 3 0 6M12.500 2.500q3 4.500 0 9M15 1q4 6 0 12" fill="none" stroke="#fff" stroke-width="1.300"/></svg>
      <span class="lang">ไทย</span>
      <div class="clock"><span>4:35</span><span>12/2/2560</span></div>
    </div>
  </footer>
</div>

</body>
</html>
```

FILE: styles.css
```css
* {
  box-sizing: border-box;
}
body {
  margin: 0;
  background: #fff;
  font-family: "Open Sans", "Noto Sans Thai", "Noto Sans", sans-serif;
  font-size: 11px;
  color: #222;
}
h1, h2, h3, h4, p {
  margin: 0;
  font-weight: normal;
}
a {
  color: inherit;
  text-decoration: none;
}
button {
  border: none;
  background: none;
  padding: 0;
  font: inherit;
  color: inherit;
  display: flex;
  align-items: center;
  justify-content: center;
}
svg {
  flex: none;
  display: block;
}
.svg-text {
  font-family: "Open Sans", sans-serif;
  font-weight: bold;
  fill: #fff;
}
.sprite {
  position: absolute;
  width: 0;
  height: 0;
}
.icon16 {
  width: 16px;
  height: 16px;
}
.desktop {
  position: relative;
  min-height: 100vh;
  display: flex;
  flex-direction: column;
}
.window {
  flex: 1;
}

/* title bar */
.titlebar {
  display: grid;
  grid-template-columns: 1fr auto 1fr;
  align-items: center;
  height: 23px;
  background: #ebebeb;
  border-bottom: 1px solid #d9d9d9;
}
.titlebar h1 {
  font-size: 14px;
  line-height: 22px;
  color: #333;
  margin-right: 88px;
}
.win-buttons {
  display: flex;
  justify-content: flex-end;
  align-self: start;
  padding-right: 3px;
}
.win-btn {
  width: 26px;
  height: 19px;
}
.win-btn.close {
  width: 45px;
  background: #bcbcbc;
}

/* toolbar */
.toolbar {
  display: flex;
  align-items: center;
  height: 40px;
  padding: 0 12px 3px 10px;
  border-bottom: 1px solid #b8b8b8;
}
.nav-btn {
  margin-right: 8px;
}
.nav-btn.recent {
  margin: 0 14px 0 2px;
}
.address {
  flex: 1;
  display: flex;
  align-items: center;
  height: 22px;
  border: 1px solid #d9d9d9;
  padding-left: 2px;
  margin: 0 12px 0 0;
  color: #222;
}
.address .sep {
  margin: 0 8px;
}
.addr-btn {
  width: 25px;
  height: 20px;
}
.addr-btn.drop {
  width: 18px;
  margin-left: auto;
}
.addr-btn.refresh {
  border-left: 1px solid #d9d9d9;
}
.search {
  display: flex;
  align-items: center;
  width: 98px;
  height: 22px;
  border: 1px solid #d9d9d9;
  padding: 0 8px;
}
.search input {
  flex: 1;
  min-width: 0;
  border: none;
  padding: 0;
  font: inherit;
  background: none;
}
.search input::placeholder {
  color: #6d6d6d;
}

/* heading */
.heading {
  display: flex;
  align-items: center;
  justify-content: space-between;
  height: 61px;
  padding: 2px 85px 0 17px;
  border-bottom: 1px solid #dbe5f0;
}
.heading h2 {
  font-size: 15px;
  color: #003399;
}
.view {
  display: flex;
  align-items: center;
  gap: 6px;
  color: #5a6478;
}
.view select {
  appearance: none;
  border: none;
  background: none;
  padding: 0;
  margin-left: 8px;
  font: inherit;
  color: #0066cc;
}

/* items */
.items {
  display: grid;
  grid-template-columns: repeat(5, 250px);
  grid-auto-rows: 50px;
  padding: 25px 19px;
}
.item {
  display: flex;
  align-items: center;
  gap: 11px;
  font-size: 15px;
  line-height: 21px;
  color: #00660f;
  white-space: nowrap;
}
.item svg {
  width: 32px;
  height: 32px;
}
.item span {
  padding-bottom: 1px;
}

/* dialog window floating over the list */
.dialog {
  position: absolute;
  left: 559px;
  top: 296px;
  width: 510px;
  padding: 0 6px 6px;
  background: #559bc6;
  border: 1px solid #3a7599;
  box-shadow: 0 0 6px rgba(0, 0, 0, 0.25);
}
.dlg-bar {
  display: flex;
  align-items: flex-start;
  justify-content: space-between;
  height: 29px;
}
.dlg-bar > svg {
  margin: 6px 0 0 3px;
}
.dlg-bar h3 {
  font-size: 14px;
  line-height: 28px;
  margin-left: 12px;
  color: #222;
}
.dlg-close {
  width: 31px;
  height: 20px;
  background: #c75050;
}
.dlg-body {
  display: flex;
  gap: 13px;
  height: 194px;
  padding: 13px 9px;
  background: #fff;
  border: 1px solid #4583a8;
  border-bottom: 1px solid #999;
}
.dlg-icon {
  width: 32px;
  height: 32px;
}
.dlg-text h4 {
  font-size: 15px;
  line-height: 34px;
  color: #0a6cbd;
  white-space: nowrap;
}
.dlg-text p {
  margin: 21px 0 0 3px;
  line-height: 15px;
  white-space: nowrap;
}
.dlg-footer {
  display: flex;
  justify-content: flex-end;
  height: 52px;
  padding: 11px 13px 0 0;
  background: #e2e2e2;
  border: 1px solid #4583a8;
  border-top: none;
}
.ok {
  width: 86px;
  height: 25px;
  padding: 1px;
  border: 1px solid #3399ff;
  outline: 1px solid #c5c5c5;
  background: linear-gradient(#f0f0f0, #e4e4e4);
}
.ok span {
  flex: 1;
  border: 1px dotted #000;
  line-height: 19px;
}

/* taskbar */
.taskbar {
  position: relative;
  display: flex;
  height: 40px;
  background: linear-gradient(90deg, #2a7fb0 0%, #3590ab 12%, #2f86ad 22%, #3289b0 38%, #277db8 46%, #2474b2 62%, #2062a0 86%, #2067a8 100%);
  border-top: 1px solid #2c6d90;
}
.wallpaper {
  position: absolute;
  left: 0;
  top: 0;
  width: 100%;
  height: 100%;
}
.task {
  position: relative;
  width: 58px;
  height: 38px;
  margin: 0 2px;
}
.task svg {
  width: 32px;
  height: 32px;
}
.task.start {
  width: 50px;
  margin: 0;
}
.task.start svg {
  width: 28px;
  height: 28px;
}
.task.open {
  background: rgba(255, 255, 255, 0.25);
  border: 1px solid rgba(255, 255, 255, 0.4);
}
.task.current {
  background: rgba(255, 255, 255, 0.42);
  border-color: rgba(255, 255, 255, 0.8);
}
.tray {
  position: relative;
  display: flex;
  align-items: center;
  gap: 9px;
  margin-left: auto;
  padding-right: 16px;
  color: #fff;
}
.tray .lang {
  margin-left: 7px;
}
.clock {
  display: flex;
  flex-direction: column;
  align-items: center;
  margin-left: 9px;
  line-height: 17px;
}
```
